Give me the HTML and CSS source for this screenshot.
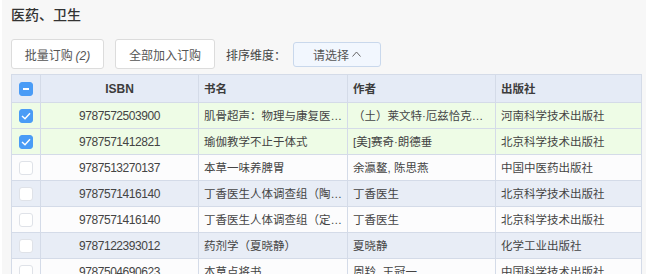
FILE: index.html
```html
<!DOCTYPE html>
<html lang="zh-CN">
<head>
  <meta charset="UTF-8" />
  <meta name="viewport" content="width=device-width, initial-scale=1.0" />
  <title>医药、卫生</title>
  <link rel="stylesheet" href="styles.css">
</head>
<body>
  <div class="page">
    <h2 class="cat-title">医药、卫生</h2>

    <div class="toolbar">
      <button class="btn">批量订购 <i>(2)</i></button>
      <button class="btn btn-wide">全部加入订购</button>
      <span class="sort-label">排序维度：</span>
      <button class="select">请选择
        <svg width="9" height="6" viewBox="0 0 9 6"><polyline points="0.5,5.5 4.5,1 8.5,5.5" fill="none" stroke="#666" stroke-width="1"/></svg>
      </button>
    </div>

    <table class="books">
      <colgroup>
        <col style="width: 29px">
        <col style="width: 158px">
        <col style="width: 149px">
        <col style="width: 148px">
        <col>
      </colgroup>
      <thead>
        <tr>
          <th class="chk"><span class="box on"><span class="minus"></span></span></th>
          <th class="isbn">ISBN</th>
          <th>书名</th>
          <th>作者</th>
          <th>出版社</th>
        </tr>
      </thead>
      <tbody>
        <tr class="picked">
          <td class="chk"><span class="box on"><svg width="10" height="8" viewBox="0 0 10 8"><polyline points="1,4 4,6.8 9,1.2" fill="none" stroke="#fff" stroke-width="1.4"/></svg></span></td>
          <td class="isbn">9787572503900</td>
          <td>肌骨超声：物理与康复医学应用</td>
          <td>（土）莱文特·厄兹恰克兰（Levent Özçakar）</td>
          <td>河南科学技术出版社</td>
        </tr>
        <tr class="picked">
          <td class="chk"><span class="box on"><svg width="10" height="8" viewBox="0 0 10 8"><polyline points="1,4 4,6.8 9,1.2" fill="none" stroke="#fff" stroke-width="1.4"/></svg></span></td>
          <td class="isbn">9787571412821</td>
          <td>瑜伽教学不止于体式</td>
          <td>[美]赛奇·朗德垂</td>
          <td>北京科学技术出版社</td>
        </tr>
        <tr>
          <td class="chk"><span class="box"></span></td>
          <td class="isbn">9787513270137</td>
          <td>本草一味养脾胃</td>
          <td>余瀛鳌, 陈思燕</td>
          <td>中国中医药出版社</td>
        </tr>
        <tr class="stripe">
          <td class="chk"><span class="box"></span></td>
          <td class="isbn">9787571416140</td>
          <td>丁香医生人体调查组（陶瓷版）</td>
          <td>丁香医生</td>
          <td>北京科学技术出版社</td>
        </tr>
        <tr>
          <td class="chk"><span class="box"></span></td>
          <td class="isbn">9787571416140</td>
          <td>丁香医生人体调查组（定制版）</td>
          <td>丁香医生</td>
          <td>北京科学技术出版社</td>
        </tr>
        <tr class="stripe">
          <td class="chk"><span class="box"></span></td>
          <td class="isbn">9787122393012</td>
          <td>药剂学（夏晓静）</td>
          <td>夏晓静</td>
          <td>化学工业出版社</td>
        </tr>
        <tr>
          <td class="chk"><span class="box"></span></td>
          <td class="isbn">9787504690623</td>
          <td>本草点将书</td>
          <td>周羚, 王冠一</td>
          <td>中国科学技术出版社</td>
        </tr>
      </tbody>
    </table>
  </div>
</body>
</html>
```

FILE: styles.css
```css
body {
  margin: 0;
  background-color: #ffffff;
  font-family: "Noto Sans CJK SC", "Liberation Sans", sans-serif;
  font-size: 12px;
  color: #444;
}

.page {
  margin-left: 2px;
  height: 274px;
  padding: 0 4px 0 9px;
  background-color: #f7f7f7;
  overflow: hidden;
}

.cat-title {
  margin: 0;
  padding-top: 4px;
  font-size: 14px;
  line-height: 20px;
  font-weight: 500;
  color: #333;
}

.toolbar {
  display: flex;
  align-items: center;
  gap: 11px;
  margin-top: 15px;
  height: 30px;
}

.btn {
  height: 30px;
  width: 93px;
  padding: 0;
  border: 1px solid #dcdcdc;
  border-radius: 3px;
  background-color: #fff;
  font-family: inherit;
  font-size: 12px;
  color: #555;
}

.btn i {
  font-family: "Liberation Sans", sans-serif;
}

.btn-wide {
  width: 100px;
}

.sort-label {
  color: #444;
  margin-right: -4px;
}

.select {
  display: flex;
  align-items: center;
  justify-content: center;
  gap: 3px;
  height: 25px;
  width: 88px;
  padding: 0;
  border: 1px solid #c9d8ec;
  border-radius: 3px;
  background-color: #f2f7fe;
  font-family: inherit;
  font-size: 12px;
  color: #555;
}

.books {
  margin-top: 5px;
  width: 631px;
  border-collapse: collapse;
  table-layout: fixed;
  background-color: #fcfcfd;
  font-family: "Liberation Sans", "Noto Sans CJK SC", sans-serif;
  font-size: 11.5px;
}

.books th,
.books td {
  border: 1px solid #d4dbe8;
  padding: 0 5px;
  text-align: left;
  white-space: nowrap;
  overflow: hidden;
  text-overflow: ellipsis;
  line-height: 16px;
}

.books th {
  height: 27px;
  background-color: #e5ebf6;
  font-weight: 700;
  color: #3c3c3c;
}

.books td {
  height: 25px;
  color: #444;
}

.books .isbn {
  text-align: center;
  font-size: 12px;
  letter-spacing: -0.45px;
}

.books th.isbn {
  letter-spacing: 0;
}

.books .chk {
  padding: 0;
  text-align: center;
}

.books tr.picked td {
  background-color: #eefce6;
}

.books tr.stripe td {
  background-color: #e8edf6;
}

.box {
  display: inline-flex;
  align-items: center;
  justify-content: center;
  width: 12px;
  height: 12px;
  border: 1px solid #dfe2e8;
  border-radius: 3px;
  background-color: #fff;
  vertical-align: middle;
}

.box.on {
  background-color: #4a9cf6;
  border-color: #4a9cf6;
}

.minus {
  width: 6px;
  height: 2px;
  background-color: #fff;
}
```
